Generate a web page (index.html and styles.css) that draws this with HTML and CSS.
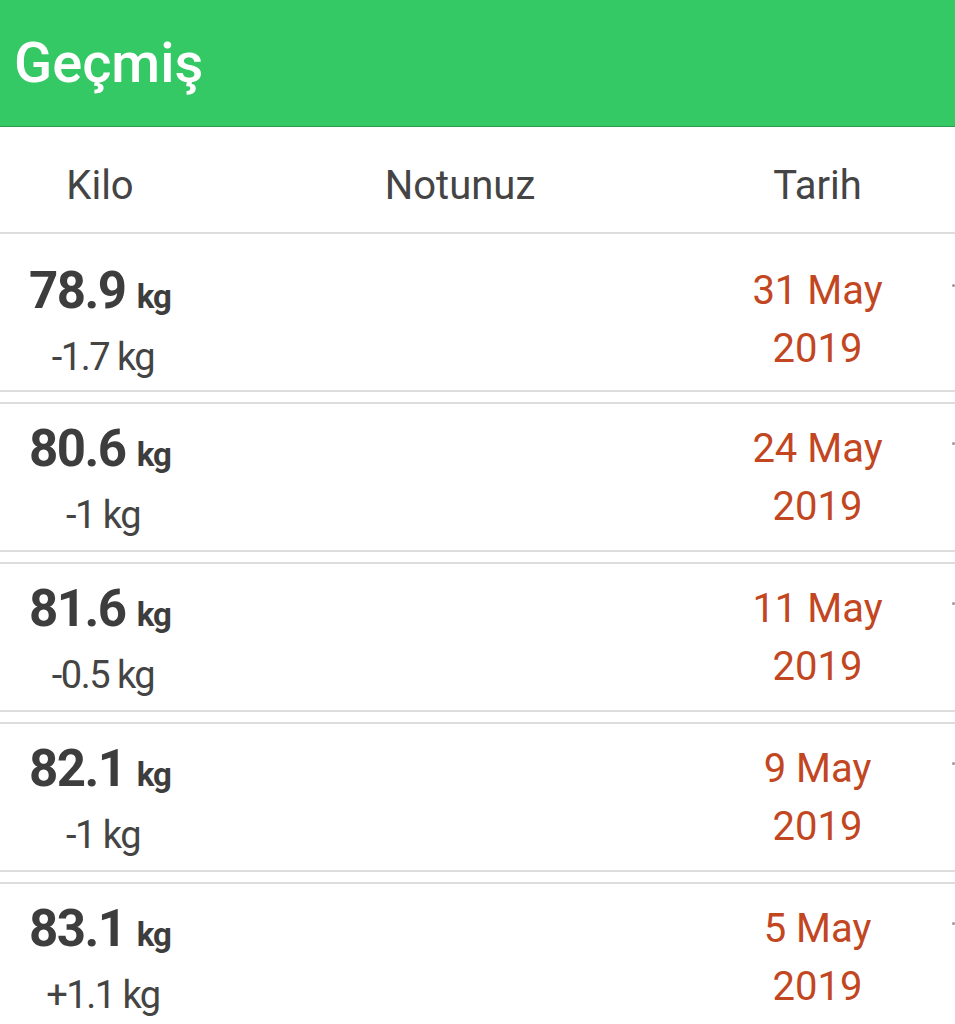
FILE: index.html
```html
<!DOCTYPE html>
<html lang="tr">
<head>
    <meta charset="UTF-8">
    <meta name="viewport" content="width=device-width, initial-scale=1.0">
    <title>Geçmiş</title>
    <link rel="stylesheet" href="styles.css">
</head>
<body>
    <header class="app-bar">
        <h1>Geçmiş</h1>
    </header>

    <div class="columns table-head">
        <div>Kilo</div>
        <div>Notunuz</div>
        <div>Tarih</div>
        <div></div>
    </div>

    <ul class="history">
        <li class="columns entry">
            <div class="col-weight">
                <div class="value">78.9 <small>kg</small></div>
                <div class="change">-1.7 kg</div>
            </div>
            <div class="col-note"></div>
            <div class="col-date">31 May<br>2019</div>
            <div class="col-more"><span class="dot"></span></div>
        </li>
        <li class="columns entry">
            <div class="col-weight">
                <div class="value">80.6 <small>kg</small></div>
                <div class="change">-1 kg</div>
            </div>
            <div class="col-note"></div>
            <div class="col-date">24 May<br>2019</div>
            <div class="col-more"><span class="dot"></span></div>
        </li>
        <li class="columns entry">
            <div class="col-weight">
                <div class="value">81.6 <small>kg</small></div>
                <div class="change">-0.5 kg</div>
            </div>
            <div class="col-note"></div>
            <div class="col-date">11 May<br>2019</div>
            <div class="col-more"><span class="dot"></span></div>
        </li>
        <li class="columns entry">
            <div class="col-weight">
                <div class="value">82.1 <small>kg</small></div>
                <div class="change">-1 kg</div>
            </div>
            <div class="col-note"></div>
            <div class="col-date">9 May<br>2019</div>
            <div class="col-more"><span class="dot"></span></div>
        </li>
        <li class="columns entry">
            <div class="col-weight">
                <div class="value">83.1 <small>kg</small></div>
                <div class="change">+1.1 kg</div>
            </div>
            <div class="col-note"></div>
            <div class="col-date">5 May<br>2019</div>
            <div class="col-more"><span class="dot"></span></div>
        </li>
    </ul>
</body>
</html>
```

FILE: styles.css
```css
body {
    margin: 0;
    font-family: Roboto, "Noto Sans", sans-serif;
    color: #424242;
    background: #fff;
    overflow: hidden;
}
.app-bar {
    height: 127px;
    background-color: #34c965;
    border-bottom: 1px solid #2a9d4f;
    box-sizing: border-box;
}
.app-bar h1 {
    margin: 0;
    padding-left: 14px;
    font-size: 56px;
    font-weight: 500;
    line-height: 126px;
    color: #fff;
}
.columns {
    display: grid;
    grid-template-columns: 200px 520px 195px 40px;
    align-items: start;
}
.table-head {
    height: 107px;
    padding-top: 12px;
    box-sizing: border-box;
    border-bottom: 2px solid #dcdcdc;
    font-size: 40px;
    line-height: 93px;
    color: #444;
    text-align: center;
}
.history {
    list-style-type: none;
    margin: 0;
    padding: 10px 0 0;
}
.entry {
    height: 150px;
    box-sizing: border-box;
    border-top: 2px solid #dcdcdc;
    border-bottom: 2px solid #dcdcdc;
    margin-bottom: 10px;
    padding-top: 14px;
}
.entry:first-child {
    border-top: none;
    margin-top: -10px;
    padding-top: 26px;
    height: 158px;
}
.col-weight {
    text-align: center;
}
.value {
    font-size: 51px;
    font-weight: 700;
    line-height: 62px;
    letter-spacing: -1.5px;
    color: #3d3d3d;
}
.value small {
    font-size: 33px;
    font-weight: 700;
    letter-spacing: -1px;
}
.change {
    font-size: 38px;
    line-height: 58px;
    letter-spacing: -1.5px;
    color: #444;
    padding-left: 6px;
}
.col-date {
    text-align: center;
    font-size: 40px;
    line-height: 58px;
    color: #c2461f;
    padding-top: 2px;
}
.col-more {
    position: relative;
    height: 100%;
}
.dot {
    position: absolute;
    right: 0;
    top: 24px;
    width: 3px;
    height: 3px;
    border-radius: 50%;
    background: #9a9a9a;
}
```
